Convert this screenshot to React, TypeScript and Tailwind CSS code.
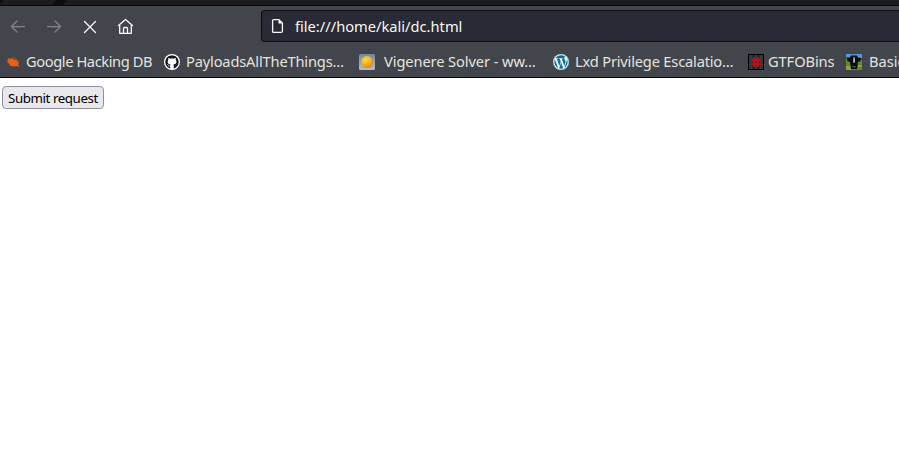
import type { ReactNode } from "react";
import { FaGithub, FaWordpress } from "react-icons/fa";

function Bookmark({ icon, label, box, text }: { icon: ReactNode; label: string; box: string; text: string }) {
  return (
    <div className={`flex h-8 shrink-0 items-center ${box}`}>
      <span className="flex size-4 shrink-0 items-center justify-center">{icon}</span>
      <span className={`pb-0.5 whitespace-nowrap ${text}`}>{label}</span>
    </div>
  );
}

const BugIcon = () => (
  <svg width="16" height="16" viewBox="0 0 16 16">
    <path d="M3 4 6 5 7 3.5 8 5.2 11 6 14 9 13 10.5 15 13 12 12 9 12.5 6 12 4 10 3 7.5 1.5 6 3.5 6Z" fill="#f2600c" />
    <path d="M2 8.5 5 9M8 3 12 6M4 12 7 10M11 6.5 14 7" stroke="#c65a24" strokeWidth=".7" />
  </svg>
);

const SunIcon = () => (
  <svg width="16" height="16" viewBox="0 0 16 16">
    <defs>
      <radialGradient id="sun" cx=".38" cy=".3" r=".75">
        <stop offset="0" stopColor="#ffd44a" />
        <stop offset=".55" stopColor="#fdb01d" />
        <stop offset="1" stopColor="#d98208" />
      </radialGradient>
      <linearGradient id="tile" x1="0" y1="0" x2="0" y2="1">
        <stop offset="0" stopColor="#71899e" />
        <stop offset="1" stopColor="#b3bfca" />
      </linearGradient>
    </defs>
    <rect width="16" height="16" rx="1.5" fill="url(#tile)" />
    <circle cx="8" cy="8" r="6" fill="url(#sun)" />
  </svg>
);

const HashIcon = () => (
  <svg width="16" height="16" viewBox="0 0 16 16">
    <rect x=".5" y=".5" width="15" height="15" fill="#35373d" stroke="#000" />
    <path d="M5.5 1v14M10.5 1v14" stroke="#15171a" strokeWidth="1.5" />
    <path d="M6 3v10M10 3v10M3 6h10M3 10h10" stroke="#c40d12" strokeWidth="1.8" />
  </svg>
);

const CowIcon = () => (
  <svg width="16" height="16" viewBox="0 0 16 16">
    <rect width="16" height="6" fill="#4a9be0" />
    <rect y="5" width="16" height="11" fill="#5c8c22" />
    <path d="M0 3h3v2H0zM13 4h3v2h-3z" fill="#386a38" />
    <path d="M0 12h5v4H0zM12 11h4v2h-4z" fill="#88a934" />
    <path d="M1 4 4 3.5 5 1.5h6l1 2 3 .5-.5 3-2.5 1-1 7H5L4 8 1.5 7Z" fill="#090b0c" />
    <path d="M7.6 3h.9l.5 4-.5 2h-.9l-.5-2Z" fill="#c7cbcc" />
    <path d="M6.3 12.8h3.4" stroke="#75716f" />
  </svg>
);

export default function App() {
  return (
    <div className="flex h-[466px] w-[899px] flex-col overflow-hidden bg-white font-['Noto_Sans',sans-serif]">
      <div className="h-1.5 shrink-0 border-b border-[#08080b] bg-[#1b1b20]">
        <svg width="70" height="5" viewBox="0 0 70 5">
          <path d="M56 0h11l-4 5H52ZM0 0h4L0 4Z" fill="#0c0c10" />
        </svg>
      </div>
      <div className="flex h-10 shrink-0 items-center bg-[#43454c]">
        <svg className="shrink-0" width="261" height="40" viewBox="0 0 261 40" fill="none" strokeLinecap="round" strokeLinejoin="round">
          <path d="M24.5 20.5h-13M17 15l-5.5 5.5L17 26M47.5 20.5h13M55 15l5.5 5.5L55 26" stroke="#85868b" strokeWidth="1.25" />
          <path d="m84.5 15.5 11 11m0-11-11 11" stroke="#fbfbfe" strokeWidth="1.3" />
          <path d="m118.5 19.5 7-6 7 6M119.7 19v8.3h11.6V19M123.5 27v-4.5q0-1 1-1h2q1 0 1 1V27" stroke="#fbfbfe" strokeWidth="1.3" />
        </svg>
        <div className="flex h-8 w-[638px] items-center rounded-l border border-r-0 border-[#0e0e12] bg-[#282a36] pl-[9px]">
          <svg width="14" height="16" viewBox="0 0 14 16" fill="none">
            <path d="M2.6 1.6h5.3l3.5 3.5v7.8q0 1.5-1.5 1.5H2.6q-1 0-1-1V2.6q0-1 1-1Z" stroke="#fbfbfe" strokeWidth="1.3" />
            <path d="M7.5 1.5v4h4Z" fill="#fbfbfe" />
          </svg>
          <span className="ml-[10px] whitespace-nowrap text-[14.67px] text-[#f8f8f2]">file:///home/kali/dc.html</span>
        </div>
      </div>
      <div className="flex h-8 shrink-0 items-center overflow-hidden border-b border-black bg-[#43454c] pl-[5px] text-[14.67px] text-[#e4e4df]">
        <Bookmark icon={<BugIcon />} label="Google Hacking DB" box="w-[159px]" text="ml-[5px] tracking-[-0.41px]" />
        <Bookmark icon={<FaGithub size={16} color="#16181d" className="rounded-full bg-white p-px" />} label="PayloadsAllTheThings…" box="w-[195px]" text="ml-[6px] tracking-[-0.17px]" />
        <Bookmark icon={<SunIcon />} label="Vigenere Solver - ww…" box="w-[194px]" text="ml-[9px] tracking-[-0.1px]" />
        <Bookmark icon={<FaWordpress size={16} color="#00749c" className="rounded-full bg-white" />} label="Lxd Privilege Escalatio…" box="w-[195px]" text="ml-[6px] tracking-[-0.19px]" />
        <Bookmark icon={<HashIcon />} label="GTFOBins" box="w-[98px]" text="ml-1 tracking-[-0.1px]" />
        <Bookmark icon={<CowIcon />} label="Basic" box="w-[80px]" text="ml-[7px]" />
      </div>
      <div className="px-0.5 pt-2">
        <button className="flex h-[23px] w-[102px] items-center rounded border border-[#8f8f9d] bg-[#e9e9ed] pt-0.5 pl-[5px] text-[13.33px] tracking-[-0.43px] whitespace-nowrap text-black">Submit request</button>
      </div>
    </div>
  );
}
